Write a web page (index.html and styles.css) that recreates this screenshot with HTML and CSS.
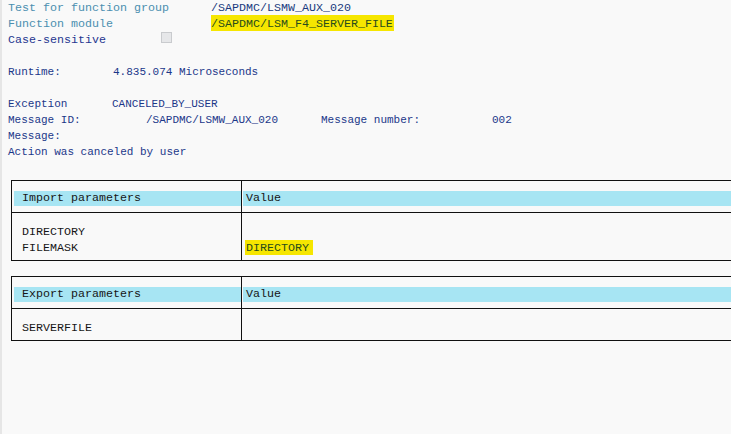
FILE: index.html
```html
<!DOCTYPE html>
<html>
<head>
  <title>Test Function Module</title>
  <link rel="stylesheet" href="styles.css">
</head>
<body class="screen">
  <div class="header">
    <div class="line"><span class="label">Test for function group</span><span class="value">/SAPDMC/LSMW_AUX_020</span></div>
    <div class="line"><span class="label">Function module</span><span class="value"><span class="marker">/SAPDMC/LSM_F4_SERVER_FILE</span></span></div>
    <div class="line"><span class="label label-check">Case-sensitive</span><span class="checkbox"></span></div>
  </div>

  <div class="result">
    <div class="line">&nbsp;</div>
    <div class="line"><span class="col-runtime">Runtime:</span>4.835.074 Microseconds</div>
    <div class="line">&nbsp;</div>
    <div class="line"><span class="col-exception">Exception</span>CANCELED_BY_USER</div>
    <div class="line"><span class="col-msgid">Message ID:</span><span class="col-msgval">/SAPDMC/LSMW_AUX_020</span><span class="col-msgnr">Message number:</span>002</div>
    <div class="line">Message:</div>
    <div class="line">Action was canceled by user</div>
  </div>

  <div class="params">
    <div class="cell head"><div class="band">Import parameters</div></div>
    <div class="cell head head-value"><div class="band">Value</div></div>
    <div class="cell body">
      <div class="row">DIRECTORY</div>
      <div class="row">FILEMASK</div>
    </div>
    <div class="cell body body-value">
      <div class="row">&nbsp;</div>
      <div class="row"><span class="marker marker-small">DIRECTORY</span></div>
    </div>
  </div>

  <div class="params">
    <div class="cell head"><div class="band">Export parameters</div></div>
    <div class="cell head head-value"><div class="band">Value</div></div>
    <div class="cell body">
      <div class="row">SERVERFILE</div>
    </div>
    <div class="cell body body-value">
      <div class="row">&nbsp;</div>
    </div>
  </div>
</body>
</html>
```

FILE: styles.css
```css
html {
  overflow: hidden;
}

body {
  margin: 0;
  padding: 0 0 0 6px;
  height: 434px;
  overflow: hidden;
  background-color: #f9f9f9;
  border-left: 2px solid #e6e6e6;
  font-family: "Liberation Mono", "Courier New", monospace;
  color: #1a3a86;
}

/* top block: function group / module */
.header {
  font-size: 11.67px;
}

.line {
  height: 16px;
  line-height: 16px;
  white-space: pre;
}

.label {
  display: inline-block;
  width: 203px;
  color: #4b8fb0;
}

.label-check {
  width: 153px;
  color: #1f3790;
}

.value {
  color: #1a3a7e;
}

.marker {
  background-color: #f6e600;
  color: #284c1c;
  padding: 2px 1px 0 0;
}

.checkbox {
  display: inline-block;
  width: 9px;
  height: 9px;
  vertical-align: top;
  background-color: #e6e7e9;
  border: 1px solid #c9cbce;
}

/* runtime and exception */
.result {
  font-size: 11px;
  color: #1b3789;
}

.col-runtime {
  display: inline-block;
  width: 105px;
}

.col-exception {
  display: inline-block;
  width: 104px;
}

.col-msgid {
  display: inline-block;
  width: 138px;
}

.col-msgval {
  display: inline-block;
  width: 175px;
}

.col-msgnr {
  display: inline-block;
  width: 171px;
}

/* parameter tables */
.params {
  display: grid;
  grid-template-columns: 229px 1fr;
  width: 760px;
  margin: 20px 0 0 3px;
  border: 1px solid #111;
  font-size: 11.67px;
  color: #161616;
}

.params + .params {
  margin-top: 15px;
}

.cell.head {
  padding: 10px 0 6px 2px;
}

.head-value {
  border-left: 1px solid #111;
}

.cell.head.head-value {
  padding-left: 1px;
}

.band {
  height: 15px;
  line-height: 15px;
  padding-left: 8px;
  background-color: #a7e5f3;
  white-space: pre;
}

.head-value .band {
  padding-left: 3px;
}

.cell.body {
  border-top: 1px solid #111;
  padding: 11px 0 4px 10px;
}

.cell.body.body-value {
  border-left: 1px solid #111;
  padding-left: 4px;
}

.row {
  height: 16px;
  line-height: 16px;
  white-space: pre;
}

.marker-small {
  padding: 1px 4px 0 1px;
  margin-left: -1px;
}
```
